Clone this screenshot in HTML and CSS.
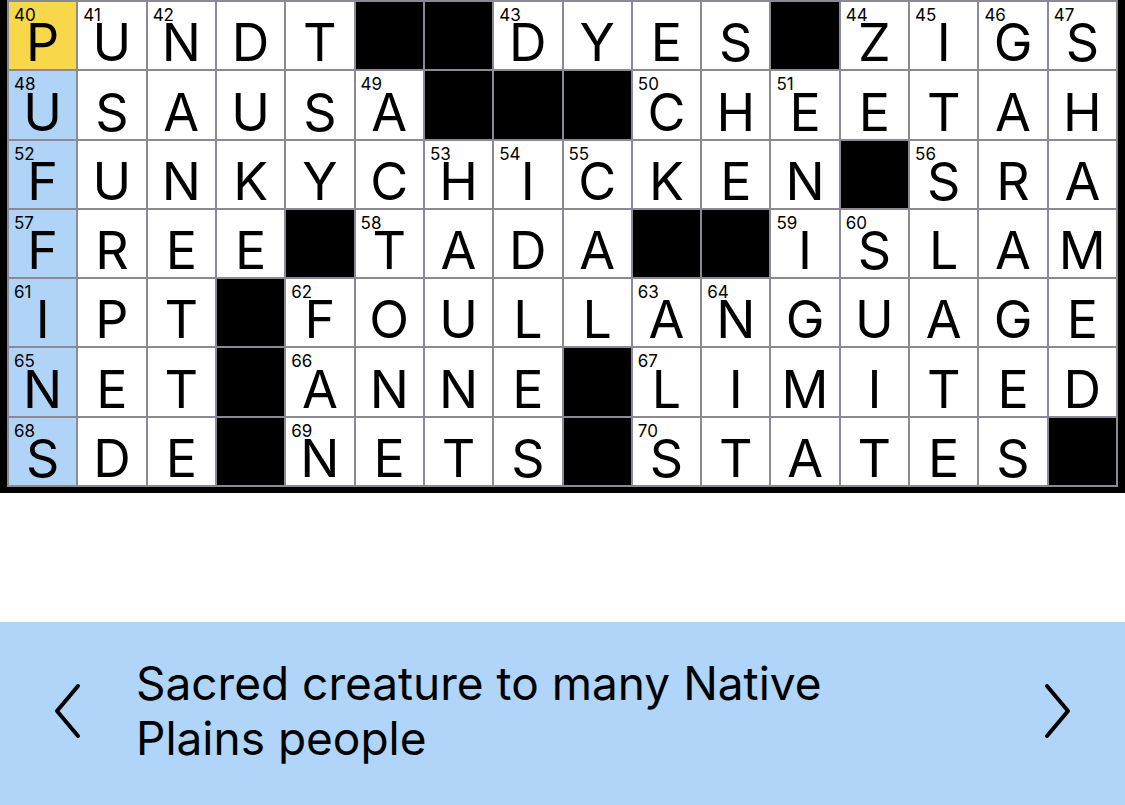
FILE: index.html
```html
<!DOCTYPE html>
<html lang="en">
<head>
<meta charset="utf-8">
<title>Crossword</title>
<link rel="stylesheet" href="styles.css">
</head>
<body>
<div class="page">
  <div class="board">
    <div class="grid" id="grid"></div>
  </div>
  <div class="spacer"></div>
  <div class="clue-bar">
    <button class="nav prev" aria-label="Previous clue">
      <svg width="30" height="56" viewBox="0 0 30 56"><polyline points="25,3 4,28 25,53" fill="none" stroke="#000" stroke-width="4" stroke-linecap="round" stroke-linejoin="round"/></svg>
    </button>
    <div class="clue-text">Sacred creature to many Native Plains people</div>
    <button class="nav next" aria-label="Next clue">
      <svg width="30" height="56" viewBox="0 0 30 56"><polyline points="5,3 26,28 5,53" fill="none" stroke="#000" stroke-width="4" stroke-linecap="round" stroke-linejoin="round"/></svg>
    </button>
  </div>
</div>
<script src="script.js"></script>
</body>
</html>
```
FILE: script.js
```js
var rows = [
  "PUNDT##DYES#ZIGS",
  "USAUSA###CHEETAH",
  "FUNKYCHICKEN#SRA",
  "FREE#TADA##ISLAM",
  "IPT#FOULLANGUAGE",
  "NET#ANNE#LIMITED",
  "SDE#NETS#STATES#"
];
var nums = {
  "0,0":40,"0,1":41,"0,2":42,"0,7":43,"0,12":44,"0,13":45,"0,14":46,"0,15":47,
  "1,0":48,"1,5":49,"1,9":50,"1,11":51,
  "2,0":52,"2,6":53,"2,7":54,"2,8":55,"2,13":56,
  "3,0":57,"3,5":58,"3,11":59,"3,12":60,
  "4,0":61,"4,4":62,"4,9":63,"4,10":64,
  "5,0":65,"5,4":66,"5,9":67,
  "6,0":68,"6,4":69,"6,9":70
};
var grid = document.getElementById("grid");
for (var r = 0; r < rows.length; r++) {
  for (var c = 0; c < 16; c++) {
    var ch = rows[r][c];
    var cell = document.createElement("div");
    cell.className = "cell";
    if (ch === "#") {
      cell.className += " block";
    } else {
      if (c === 0) cell.className += (r === 0 ? " current" : " word");
      var key = r + "," + c;
      if (nums[key]) {
        var n = document.createElement("span");
        n.className = "num";
        n.textContent = nums[key];
        cell.appendChild(n);
      }
      var l = document.createElement("span");
      l.className = "letter";
      l.textContent = ch;
      cell.appendChild(l);
    }
    grid.appendChild(cell);
  }
}
```
FILE: styles.css
```css
html, body {
  margin: 0;
  padding: 0;
  background: #ffffff;
}
body {
  font-family: Inter, "Liberation Sans", sans-serif;
  color: #000;
}
.page {
  width: 1125px;
  height: 805px;
  display: flex;
  flex-direction: column;
  overflow: hidden;
}
.board {
  background: #000;
  padding: 0 7px 6px 7px;
  width: 1125px;
  box-sizing: border-box;
}
.grid {
  display: grid;
  grid-template-columns: repeat(16, 1fr);
  grid-auto-rows: 67.3px;
  gap: 2px;
  padding: 2px;
  background: #8a8a96;
}
.cell {
  position: relative;
  background: #fff;
  display: flex;
  justify-content: center;
  align-items: flex-end;
}
.cell.block { background: #000; }
.cell.current { background: #f8d74a; }
.cell.word { background: #afd4f8; }
.num {
  position: absolute;
  left: 5px;
  top: 5px;
  font-size: 17px;
  line-height: 1;
}
.letter {
  font-size: 52px;
  line-height: 1;
  padding-bottom: 0;
}
.spacer {
  height: 129px;
}
.clue-bar {
  flex: 1;
  background: #b0d5f8;
  display: flex;
  align-items: center;
  padding: 0 52px 6px 52px;
}
.nav {
  background: none;
  border: 0;
  padding: 0;
  width: 32px;
  display: flex;
  align-items: center;
  justify-content: center;
}
.clue-text {
  flex: 1;
  font-size: 46px;
  line-height: 55px;
  padding: 0 190px 0 52px;
}
```
